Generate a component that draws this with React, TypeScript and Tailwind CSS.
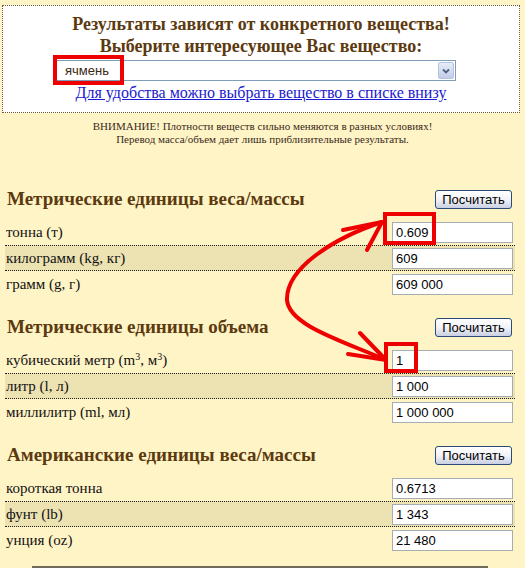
import React from 'react';

type Row = { label: React.ReactNode; value: string };

const sections: { title: string; rows: Row[] }[] = [
  {
    title: 'Метрические единицы веса/массы',
    rows: [
      { label: 'тонна (т)', value: '0.609' },
      { label: 'килограмм (kg, кг)', value: '609' },
      { label: 'грамм (g, г)', value: '609 000' },
    ],
  },
  {
    title: 'Метрические единицы объема',
    rows: [
      {
        label: (
          <>
            кубический метр (m<sup className="text-[10px] -top-[0.5em]">3</sup>, м
            <sup className="text-[10px] -top-[0.5em]">3</sup>)
          </>
        ),
        value: '1',
      },
      { label: 'литр (l, л)', value: '1 000' },
      { label: 'миллилитр (ml, мл)', value: '1 000 000' },
    ],
  },
  {
    title: 'Американские единицы веса/массы',
    rows: [
      { label: 'короткая тонна', value: '0.6713' },
      { label: 'фунт (lb)', value: '1 343' },
      { label: 'унция (oz)', value: '21 480' },
    ],
  },
];

const CalcButton = () => (
  <button className="h-[19px] w-[77px] rounded-[3px] border border-[#2a4a78] bg-gradient-to-b from-white via-[#f1f3f8] to-[#c9d0e2] font-['Liberation_Sans',sans-serif] text-[13px] leading-none text-black">
    Посчитать
  </button>
);

const Section = ({ title, rows, last }: { title: string; rows: Row[]; last?: boolean }) => (
  <div className={`pl-[5px] pr-[10px] ${last ? '' : 'pb-[16px]'}`}>
    <div className="flex h-[28px] items-center justify-between pl-[2px] pr-[3px]">
      <h2 className="text-[19px] font-bold text-[#5c3a10]">{title}</h2>
      <CalcButton />
    </div>
    <div className="mt-[6px]">
      {rows.map((r, i) => (
        <div
          key={i}
          className={`flex h-[26px] items-center justify-between pl-[1px] pr-[2px] ${
            i === 1 ? 'border-y border-dotted border-[#222] bg-[#ece2b2]' : ''
          }`}
        >
          <span className="text-[15px] text-[#111]">{r.label}</span>
          <input
            readOnly
            value={r.value}
            className="h-[21px] w-[121px] border border-[#a5acb2] bg-white px-[3px] font-['Liberation_Sans',sans-serif] text-[13px] text-black outline-none"
          />
        </div>
      ))}
    </div>
  </div>
);

export default function App() {
  return (
    <div className="relative h-[568px] w-[525px] overflow-hidden bg-[#fff4c6] font-['Liberation_Serif',serif]">
      <div className="pl-[2px] pr-[5px] pt-[5px]">
        <div className="h-[108px] border border-dotted border-[#6b5a3a] bg-white pt-[7px] text-center">
          <div className="text-[18px] font-bold leading-[22px] text-[#5c3a10]">
            Результаты зависят от конкретного вещества!
            <br />
            Выберите интересующее Вас вещество:
          </div>
          <div className="ml-[52px] mt-[3px] flex h-[21px] w-[401px] items-center border border-[#7f9db9] bg-white">
            <span className="flex-1 pl-[9px] text-left font-['Liberation_Sans',sans-serif] text-[13px] text-[#3a2a14]">
              ячмень
            </span>
            <span className="mr-[1px] flex h-[17px] w-[16px] items-center justify-center rounded-[2px] border border-[#b5c3df] bg-gradient-to-b from-[#e6ecf8] to-[#c2cde6]">
              <svg width="8" height="6" viewBox="0 0 8 6">
                <path d="M1 1.5 L4 4.5 L7 1.5" fill="none" stroke="#4d6185" strokeWidth="1.8" />
              </svg>
            </span>
          </div>
          <a href="#" className="mt-[1px] inline-block text-[16px] leading-[20px] text-[#1a1ad0] underline">
            Для удобства можно выбрать вещество в списке внизу
          </a>
        </div>
      </div>

      <div className="mt-[7px] text-center text-[11px] leading-[13px] text-[#3a2a1a]">
        ВНИМАНИЕ! Плотности веществ сильно меняются в разных условиях!
        <br />
        Перевод масса/объем дает лишь приблизительные результаты.
      </div>

      <div className="mt-[39px]">
        {sections.map((s, i) => (
          <Section key={i} title={s.title} rows={s.rows} last={i === sections.length - 1} />
        ))}
      </div>
      <div className="ml-[32px] mt-[13px] h-[2px] w-[456px] bg-[#6f6a5a]" />

      <svg
        className="pointer-events-none absolute left-0 top-0"
        width="525"
        height="568"
        viewBox="0 0 525 568"
        fill="none"
        stroke="#ee0000"
      >
        <rect x="55" y="57" width="67" height="26" strokeWidth="4" />
        <rect x="385" y="214" width="49" height="29" strokeWidth="4" />
        <rect x="386" y="344" width="30" height="27" strokeWidth="4" />
        <g strokeWidth="4" strokeLinecap="round" strokeLinejoin="round">
          <path d="M382 222 C334 238 286 268 287 300 C289 325 340 340 386 360" />
          <path d="M343 230 L382 222 L367 250" />
          <path d="M360 333 L386 360 L348 354" />
        </g>
      </svg>
    </div>
  );
}
